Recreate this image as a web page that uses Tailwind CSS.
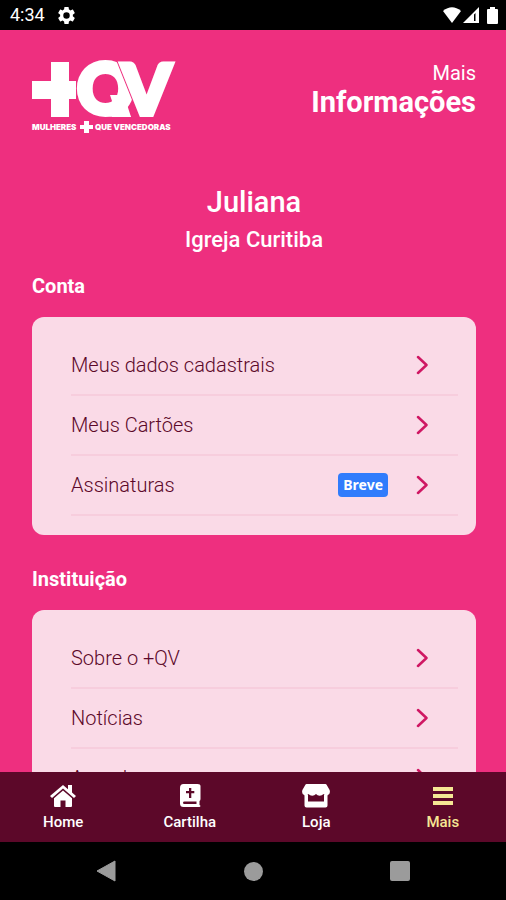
<!DOCTYPE html>
<html lang="pt-BR">
<head>
    <meta charset="UTF-8">
    <meta name="viewport" content="width=device-width, initial-scale=1.0">
    <title>+QV - Mais Informações</title>
    <script src="https://cdn.jsdelivr.net/npm/@tailwindcss/browser@4"></script>
</head>
<body class="flex h-screen flex-col overflow-hidden bg-[#ee2f7f] font-['Roboto',sans-serif] text-white">
    <!-- Chevron reutilizado nas listas -->
    <svg class="hidden">
        <symbol id="chevron" viewBox="0 0 12 20">
            <path d="M2 2l8.500 8L2 18" fill="none" stroke="currentColor" stroke-width="2.500" stroke-linecap="round" stroke-linejoin="round"/>
        </symbol>
    </svg>

    <!-- Barra de status -->
    <div class="flex h-[30px] shrink-0 items-center justify-between bg-black pr-2 pl-[10px]">
        <div class="flex items-center gap-[13px]">
            <span class="text-lg">4:34</span>
            <svg class="size-[17px]" viewBox="2 2 20 20" fill="currentColor" aria-hidden="true">
                <path fill-rule="evenodd" d="M19.430 12.980c.04-.32.07-.64.07-.98s-.03-.66-.07-.98l2.110-1.650c.19-.15.24-.42.12-.64l-2-3.460c-.12-.22-.39-.3-.61-.22l-2.490 1c-.52-.4-1.080-.73-1.690-.98l-.38-2.650A.488.488 0 0 0 14 2h-4c-.25 0-.46.18-.49.42l-.38 2.650c-.61.25-1.170.59-1.690.98l-2.490-1c-.23-.09-.49 0-.61.22l-2 3.460c-.13.22-.07.49.12.64l2.110 1.650c-.04.32-.07.65-.07.98s.03.66.07.98l-2.110 1.650c-.19.15-.24.42-.12.64l2 3.460c.12.22.39.3.61.22l2.490-1c.52.4 1.080.73 1.690.98l.38 2.650c.03.24.24.42.49.42h4c.25 0 .46-.18.49-.42l.38-2.650c.61-.25 1.170-.59 1.690-.98l2.490 1c.23.09.49 0 .61-.22l2-3.460c.12-.22.07-.49-.12-.64zM12 15.800a3.800 3.800 0 1 1 0-7.600 3.800 3.800 0 0 1 0 7.600z"/>
            </svg>
        </div>
        <div class="flex items-center">
            <svg class="h-4 w-[18px]" viewBox="0 0 18 16" fill="currentColor" aria-hidden="true">
                <path d="M0 4Q9-3.500 18 4L9 16z"/>
            </svg>
            <svg class="ml-[2px] h-4 w-4" viewBox="0 0 16 16" fill="currentColor" aria-hidden="true">
                <path fill-rule="evenodd" d="M0 16L16 0v16zM11 7.500V14h1.500V6z"/>
            </svg>
            <svg class="ml-2 h-[17px] w-[11px]" viewBox="0 0 11 17" fill="currentColor" aria-hidden="true">
                <path d="M3 0h5v2h2a1 1 0 0 1 1 1v13a1 1 0 0 1-1 1H1a1 1 0 0 1-1-1V3a1 1 0 0 1 1-1h2z"/>
            </svg>
        </div>
    </div>

    <main class="min-h-0 flex-1 overflow-hidden pt-8 pr-[30px] pl-8">
        <header class="flex items-start justify-between">
            <svg class="h-[72px] w-[141px] overflow-visible" viewBox="0 0 141 72" fill="currentColor" role="img" aria-label="+QV Mulheres que Vencedoras">
                <clipPath id="logo-base"><path d="M40-2h104v57H40z"/></clipPath>
                <path d="M19 0h18v19h7v18h-7v18H19V37H0V19h19z"/>
                <g class="font-['Lato'] font-black" font-size="70" clip-path="url(#logo-base)" stroke-linejoin="miter">
                    <text x="45" y="52" stroke="currentColor" stroke-width="5">Q</text>
                    <path d="M78 33h14l7 22H85l-3-10z"/>
                    <text x="90" y="53" stroke="#ee2f7f" stroke-width="7">V</text>
                    <text x="90" y="53" stroke="currentColor" stroke-width="5" aria-hidden="true">V</text>
                </g>
                <g class="font-['Inter'] font-black" font-size="8">
                    <text x="0" y="68">MULHERES</text>
                    <text x="63" y="68">QUE VENCEDORAS</text>
                </g>
                <path d="M52 59h5v4h4v4h-4v4h-5v-4h-4v-4h4z"/>
            </svg>
            <h1 class="text-right">
                <span class="block text-xl leading-[22px]">Mais</span>
                <span class="block text-[29px] leading-9 font-bold">Informações</span>
            </h1>
        </header>

        <div class="mt-[50px] text-center font-medium">
            <p class="text-[29px] leading-9">Juliana</p>
            <p class="mt-[6px] text-[22px] leading-7">Igreja Curitiba</p>
        </div>

        <section class="mt-5">
            <h2 class="text-xl leading-6 font-bold">Conta</h2>
            <ul class="mt-[19px] rounded-xl bg-[#fadae7] pt-[19px] pr-[18px] pb-[19px] pl-[39px] text-xl font-light text-[#5c0829]">
                <li class="border-b-2 border-[#f7cddd]">
                    <a href="#" class="flex h-[58px] items-center pr-[30px]">
                        <span class="flex-1">Meus dados cadastrais</span>
                        <svg class="h-5 w-3 text-[#cf1763]"><use href="#chevron"/></svg>
                    </a>
                </li>
                <li class="border-b-2 border-[#f7cddd]">
                    <a href="#" class="flex h-[58px] items-center pr-[30px]">
                        <span class="flex-1">Meus Cartões</span>
                        <svg class="h-5 w-3 text-[#cf1763]"><use href="#chevron"/></svg>
                    </a>
                </li>
                <li class="border-b-2 border-[#f7cddd]">
                    <a href="#" class="flex h-[58px] items-center pr-[30px]">
                        <span class="flex-1">Assinaturas</span>
                        <span class="mr-7 rounded bg-[#307cfc] px-[5px] font-['Noto_Sans'] text-[14px] leading-6 font-bold text-white">Breve</span>
                        <svg class="h-5 w-3 text-[#cf1763]"><use href="#chevron"/></svg>
                    </a>
                </li>
            </ul>
        </section>

        <section class="mt-8">
            <h2 class="text-xl leading-6 font-bold">Instituição</h2>
            <ul class="mt-[19px] rounded-xl bg-[#fadae7] pt-[19px] pr-[18px] pb-[19px] pl-[39px] text-xl font-light text-[#5c0829]">
                <li class="border-b-2 border-[#f7cddd]">
                    <a href="#" class="flex h-[58px] items-center pr-[30px]">
                        <span class="flex-1">Sobre o +QV</span>
                        <svg class="h-5 w-3 text-[#cf1763]"><use href="#chevron"/></svg>
                    </a>
                </li>
                <li class="border-b-2 border-[#f7cddd]">
                    <a href="#" class="flex h-[58px] items-center pr-[30px]">
                        <span class="flex-1">Notícias</span>
                        <svg class="h-5 w-3 text-[#cf1763]"><use href="#chevron"/></svg>
                    </a>
                </li>
                <li class="border-b-2 border-[#f7cddd]">
                    <a href="#" class="flex h-[58px] items-center pr-[30px]">
                        <span class="flex-1">Agenda</span>
                        <svg class="h-5 w-3 text-[#cf1763]"><use href="#chevron"/></svg>
                    </a>
                </li>
            </ul>
        </section>
    </main>

    <!-- Menu inferior -->
    <nav class="grid h-[70px] shrink-0 grid-cols-4 bg-[#5c0829] text-[15px] leading-5 font-medium">
        <a href="#" class="flex flex-col items-center pt-3">
            <svg class="h-6 w-7" viewBox="0 0 28 24" fill="currentColor" aria-hidden="true">
                <path d="M14 1L1 12l2 2L14 4.500 25 14l2-2-4-3.400V1h-4v4.200z"/>
                <path d="M14 6.500L5 14.200V22q0 1 1 1h5.500v-6.500h5V23H22q1 0 1-1v-7.800z"/>
            </svg>
            <span class="mt-1">Home</span>
        </a>
        <a href="#" class="flex flex-col items-center pt-3">
            <svg class="h-6 w-7" viewBox="0 0 28 24" fill="currentColor" aria-hidden="true">
                <path fill-rule="evenodd" d="M7.500 0h14q3 0 3 2v13q0 1.500-1 2V21q1 .300 1 1t-1 1h-16Q4 23 4 19.500V4q0-4 3.500-4zM13 4v3h-3v2.300h3V14h2.300V9.300h3V7h-3V4zM8.500 17.500Q7 17.500 7 18.800T8.500 20H20.500v-2.500z"/>
            </svg>
            <span class="mt-1">Cartilha</span>
        </a>
        <a href="#" class="flex flex-col items-center pt-3">
            <svg class="h-6 w-7" viewBox="0 0 28 24" fill="currentColor" aria-hidden="true">
                <path d="M4.500 0h19q.700 0 1.100.700l3 5.300q1.200 4-2.100 5.300-2.500.800-4-1.200-1.500 1.700-3.800 1.700T14 10.100q-1.500 1.700-3.800 1.700T6.500 10.100q-1.500 2-4 1.200Q-.800 10 .4 6l3-5.300Q3.800 0 4.500 0z"/>
                <path d="M2.500 11h3.500v6.500h16V11h3.500v10.500q0 2-2 2h-19q-2 0-2-2z"/>
            </svg>
            <span class="mt-1">Loja</span>
        </a>
        <a href="#" class="flex flex-col items-center pt-3 text-[#f5e794]" aria-current="page">
            <svg class="h-6 w-7" viewBox="0 0 28 24" fill="currentColor" aria-hidden="true">
                <path d="M4 3h20v4H4zM4 10h20v4H4zM4 17h20v4H4z"/>
            </svg>
            <span class="mt-1">Mais</span>
        </a>
    </nav>

    <!-- Botões do sistema -->
    <div class="flex h-[58px] shrink-0 items-center justify-between bg-black px-24 text-[#9b9b9b]">
        <button type="button" aria-label="Voltar">
            <svg class="h-[22px] w-[20px]" viewBox="0 0 20 22" fill="currentColor"><path d="M1 11L19 1v20z" stroke="currentColor" stroke-linejoin="round"/></svg>
        </button>
        <button type="button" aria-label="Início" class="size-[19px] rounded-full bg-[#9b9b9b]"></button>
        <button type="button" aria-label="Recentes" class="size-[20px] rounded-[2px] bg-[#9b9b9b]"></button>
    </div>
</body>
</html>
